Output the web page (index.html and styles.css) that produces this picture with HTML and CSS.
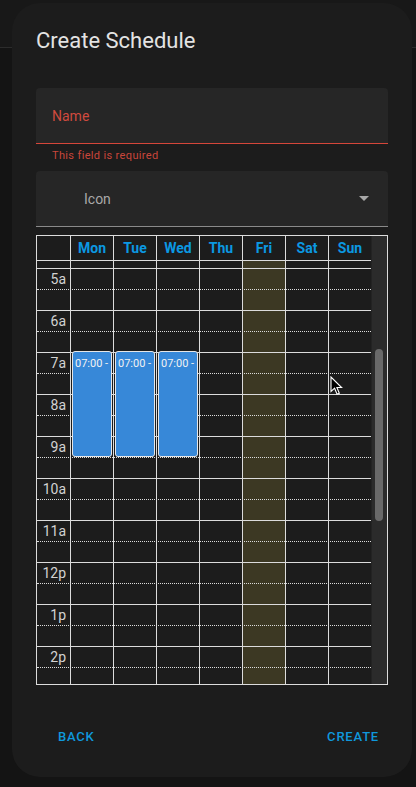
FILE: index.html
```html
<!DOCTYPE html>
<html lang="en">
<head>
<meta charset="utf-8">
<title>Create Schedule</title>
<link rel="stylesheet" href="styles.css">
</head>
<body>
<div class="appbar"></div>

<div class="dialog" role="dialog">
  <h2 class="title">Create Schedule</h2>
  <div class="content">
    <div class="field field-name"><span class="label-error">Name</span></div>
    <div class="helper">This field is required</div>
    <div class="field field-icon">
      <span class="label">Icon</span>
      <span class="arrow"></span>
    </div>

    <div class="cal">
      <div class="cal-main">
        <div class="cal-head">
          <div class="hcell"></div>
          <div class="hcell">Mon</div>
          <div class="hcell">Tue</div>
          <div class="hcell">Wed</div>
          <div class="hcell">Thu</div>
          <div class="hcell">Fri</div>
          <div class="hcell">Sat</div>
          <div class="hcell">Sun</div>
        </div>
        <div class="cal-body">
          <div class="partial"></div>
          <div class="hour"><div class="half"><span class="tlabel">5a</span></div></div>
          <div class="hour"><div class="half"><span class="tlabel">6a</span></div></div>
          <div class="hour"><div class="half"><span class="tlabel">7a</span></div></div>
          <div class="hour"><div class="half"><span class="tlabel">8a</span></div></div>
          <div class="hour"><div class="half"><span class="tlabel">9a</span></div></div>
          <div class="hour"><div class="half"><span class="tlabel">10a</span></div></div>
          <div class="hour"><div class="half"><span class="tlabel">11a</span></div></div>
          <div class="hour"><div class="half"><span class="tlabel">12p</span></div></div>
          <div class="hour"><div class="half"><span class="tlabel">1p</span></div></div>
          <div class="hour"><div class="half"><span class="tlabel">2p</span></div></div>

          <div class="event ev-mon">07:00 -</div>
          <div class="event ev-tue">07:00 -</div>
          <div class="event ev-wed">07:00 -</div>

          <svg class="cursor" width="13" height="20" viewBox="0 0 13 20" aria-hidden="true">
            <path d="M1 1 L1 15.5 L4.6 12.2 L7.1 18.2 L9.3 17.3 L6.9 11.5 L11.6 11.5 Z" fill="#000" stroke="#fff" stroke-width="1.1" stroke-linejoin="miter"/>
          </svg>
        </div>
      </div>
      <div class="scroll"><div class="thumb"></div></div>
    </div>
  </div>
  <div class="actions">
    <button class="btn">Back</button>
    <button class="btn">Create</button>
  </div>
</div>
</body>
</html>
```

FILE: styles.css
```css
* { box-sizing: border-box; }

html, body {
  margin: 0;
  padding: 0;
}

body {
  width: 416px;
  height: 787px;
  background: #141414;
  font-family: Roboto, "Noto Sans", "Liberation Sans", sans-serif;
  position: relative;
  overflow: hidden;
}

.appbar {
  height: 48px;
  background: #181818;
  border-bottom: 1px solid #2c2c2c;
}

.dialog {
  position: absolute;
  left: 12px;
  top: 3px;
  width: 400px;
  height: 774px;
  background: #1c1c1c;
  border-radius: 28px;
  display: flex;
  flex-direction: column;
}

.title {
  margin: 0;
  padding: 24px 24px 0;
  font-size: 22px;
  line-height: 28px;
  font-weight: 400;
  color: #e3e3e3;
}

.content {
  padding: 33px 24px 0;
}

.field {
  height: 56px;
  background: #262626;
  border-radius: 4px 4px 0 0;
  display: flex;
  align-items: center;
}

.field-name {
  border-bottom: 1px solid #d5463a;
  padding-left: 16px;
}

.label-error {
  color: #cf4a3e;
  font-size: 14px;
}

.helper {
  padding: 4px 16px 0;
  height: 20px;
  font-size: 11px;
  line-height: 16px;
  letter-spacing: 0.35px;
  color: #c9463b;
}

.field-icon {
  margin-top: 7px;
  border-bottom: 1px solid #8a8a8a;
  padding: 0 19px 0 48px;
}

.field-icon .label {
  flex: 1;
  color: #a9a9a9;
  font-size: 14px;
}

.arrow {
  width: 0;
  height: 0;
  border-left: 5px solid transparent;
  border-right: 5px solid transparent;
  border-top: 5px solid #a8a8a8;
}

/* Calendar */
.cal {
  margin-top: 8px;
  width: 352px;
  height: 450px;
  border: 1px solid #dcdcdc;
  display: flex;
}

.cal-main {
  width: 334px;
  display: flex;
  flex-direction: column;
  background-image: linear-gradient(90deg, #dcdcdc 1px, transparent 1px);
  background-size: 43px 100%;
  background-position: 33px 0;
  background-repeat: repeat-x;
}

.cal-head {
  height: 25px;
  border-bottom: 1px solid #dcdcdc;
  display: grid;
  grid-template-columns: 33px repeat(7, 43px);
}

.hcell {
  display: flex;
  align-items: center;
  justify-content: center;
  padding-left: 1px;
  font-size: 14px;
  font-weight: 700;
  color: #0b98e2;
}

.cal-body {
  position: relative;
  height: 423px;
  overflow: hidden;
  background-image: linear-gradient(#3c3823, #3c3823);
  background-size: 42px 100%;
  background-position: 206px 0;
  background-repeat: no-repeat;
}

.partial {
  height: 7px;
}

.hour {
  height: 42px;
  border-top: 1px solid #dcdcdc;
}

.half {
  height: 21px;
  border-bottom: 1px dotted #dcdcdc;
}

.tlabel {
  display: block;
  width: 33px;
  padding-right: 4px;
  text-align: right;
  font-size: 14px;
  line-height: 20px;
  color: #d2d2d2;
}

.event {
  position: absolute;
  top: 90px;
  width: 40px;
  height: 106px;
  background: #3788d8;
  border: 1px solid #e6e6e6;
  border-radius: 3px;
  padding: 4px 2px;
  font-size: 11px;
  line-height: 15px;
  color: #f2f2f2;
  white-space: nowrap;
  overflow: hidden;
}

.ev-mon { left: 35px; }
.ev-tue { left: 78px; }
.ev-wed { left: 121px; }

.cursor {
  position: absolute;
  left: 293px;
  top: 115px;
}

.scroll {
  width: 16px;
  background: #2b2b2b;
  border-left: 1px solid #232323;
  padding-top: 113px;
  padding-left: 3px;
}

.thumb {
  width: 8px;
  height: 172px;
  border-radius: 4px;
  background: #696969;
}

/* Actions */
.actions {
  display: flex;
  justify-content: space-between;
  padding: 33px 25px 0 38px;
}

.btn {
  height: 36px;
  padding: 0 8px;
  background: none;
  border: none;
  font-family: Roboto, "Noto Sans", sans-serif;
  font-size: 13px;
  font-weight: 500;
  letter-spacing: 0.8px;
  text-transform: uppercase;
  color: #0f98dc;
}
```
